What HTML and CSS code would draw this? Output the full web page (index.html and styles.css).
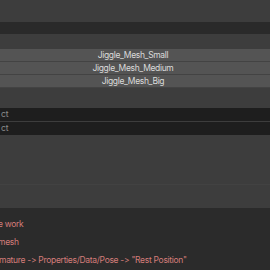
FILE: index.html
```html
<!DOCTYPE html>
<html lang="en">
<head>
  <meta charset="UTF-8" />
  <title>Jiggle</title>
  <link rel="stylesheet" href="styles.css">
</head>
<body>
  <div class="panel">
    <div class="topo"></div>
    <div class="faixa"></div>
    <div class="espaco"></div>
    <div class="menu">
      <div class="item">Jiggle_Mesh_Small</div>
      <div class="item">Jiggle_Mesh_Medium</div>
      <div class="item">Jiggle_Mesh_Big</div>
    </div>
    <div class="campos">
      <div class="campo">ct</div>
      <div class="campo">ct</div>
    </div>
    <div class="vazio"><div class="linha"></div></div>
  </div>
  <div class="info">
    <p class="msg l1">e work</p>
    <p class="msg l2">mesh</p>
    <p class="msg l3">mature -&gt; Properties/Data/Pose -&gt; "Rest Position"</p>
  </div>
</body>
</html>
```
FILE: styles.css
```css
body {
  margin: 0;
  width: 270px;
  height: 270px;
  overflow: hidden;
  font-family: Inter, "DejaVu Sans", sans-serif;
  font-feature-settings: "calt" 0, "liga" 0;
  background: #2b2b2b;
}
.panel {
  background: #3d3d3d;
}
.topo {
  height: 22px;
}
.faixa {
  height: 12px;
  background: #2a2a2a;
}
.espaco {
  height: 15px;
}
.menu {
  display: flex;
  flex-direction: column;
}
.item {
  height: 12px;
  line-height: 12px;
  background: #545454;
  border-bottom: 1px solid #434343;
  color: #dadada;
  font-size: 8.5px;
  letter-spacing: -0.35px;
  text-align: center;
  padding-right: 4px;
}
.campos {
  padding-top: 20px;
  display: flex;
  flex-direction: column;
  gap: 1px;
}
.campo {
  height: 13px;
  line-height: 13px;
  background: #1e1e1e;
  color: #8c8c8c;
  font-size: 8.5px;
  padding-left: 1px;
}
.vazio {
  height: 73px;
  display: flex;
  flex-direction: column;
  justify-content: flex-end;
}
.linha {
  height: 1px;
  margin-bottom: 23px;
  background: #424242;
}
.info {
  padding-top: 7px;
  overflow: hidden;
}
.msg {
  margin: 0;
  height: 18px;
  line-height: 18px;
  font-size: 8.5px;
  letter-spacing: -0.3px;
  color: #d47d7a;
  white-space: nowrap;
}
.l1 {
  margin-left: -2px;
}
.l2 {
  margin-left: -2px;
}
.l3 {
  margin-left: -1px;
}
```
